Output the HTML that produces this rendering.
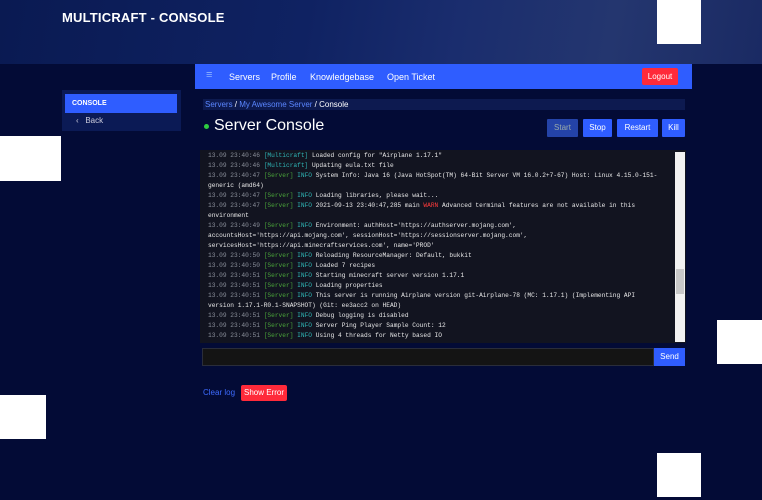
<!DOCTYPE html>
<html><head><style>
*{margin:0;padding:0;box-sizing:border-box}
body{width:762px;height:500px;overflow:hidden;background:#030b36;font-family:"Liberation Sans",sans-serif;position:relative;color:#fff}
.a{position:absolute}
.hdr{left:0;top:0;width:762px;height:64px;background:linear-gradient(100deg,#0a1a52 0%,#0f2262 40%,#1a2d6e 60%,#24366f 80%,#1a2a63 100%)}
.w{background:#fff}
.nav{left:195px;top:64px;width:497px;height:25px;background:#2f5dff;font-size:9px}
.nav span{position:absolute;top:8px}
.mono{font-family:"Liberation Mono",monospace;font-size:6.2px;color:#e8e8e8;white-space:pre;line-height:10px}
.g{color:#8a8f9a}.gr{color:#4aa53a}.c{color:#2fb5b5}.r{color:#ff3b3b}
.btn{top:119px;height:18px;background:#2f5dff;font-size:8px;text-align:center;line-height:18px;border-radius:1px}
</style></head><body>
<div class="a hdr"></div>
<div class="a" style="left:62px;top:10px;font-size:13px;font-weight:bold;letter-spacing:0.2px">MULTICRAFT - CONSOLE</div>
<div class="a nav"><span style="left:11px;color:#8fb4ff;font-size:11px;top:5px">≡</span><span style="left:34px">Servers</span><span style="left:76px">Profile</span><span style="left:115px">Knowledgebase</span><span style="left:192px">Open Ticket</span>
<div class="a" style="left:447px;top:4px;width:36px;height:17px;background:#ff2a3a;border-radius:2px;font-size:8px;text-align:center;line-height:17px">Logout</div></div>
<div class="a" style="left:62px;top:90px;width:119px;height:41px;background:#0b1a55"></div>
<div class="a" style="left:65px;top:94px;width:112px;height:19px;background:#2f5dff;font-size:7px;font-weight:bold;line-height:19px;padding-left:7px">CONSOLE</div>
<div class="a" style="left:76px;top:116px;font-size:8px;color:#ccd">‹&nbsp;&nbsp; Back</div>
<div class="a" style="left:203px;top:99px;width:482px;height:11px;background:#0d1a50;font-size:8px;line-height:11px;padding-left:2px"><span style="color:#5a86ff">Servers</span> / <span style="color:#5a86ff">My Awesome Server</span> / Console</div>
<div class="a" style="left:204px;top:124px;width:5px;height:5px;border-radius:50%;background:#2ecc40"></div>
<div class="a" style="left:214px;top:117px;font-size:16px">Server Console</div>
<div class="a btn" style="left:547px;width:31px;background:#2443a8;color:#9aa">Start</div>
<div class="a btn" style="left:583px;width:29px">Stop</div>
<div class="a btn" style="left:617px;width:41px">Restart</div>
<div class="a btn" style="left:662px;width:23px">Kill</div>
<div class="a" style="left:200px;top:150px;width:486px;height:193px;background:#121420"></div>
<div class="a" style="left:675px;top:152px;width:10px;height:190px;background:#f2f2f2"><div class="a" style="left:1px;top:117px;width:8px;height:25px;background:#c8c8c8"></div></div>
<div class="a mono" style="left:208px;top:151px"><span class="g">13.09 23:40:46</span> <span class="c">[Multicraft]</span> Loaded config for "Airplane 1.17.1"
<span class="g">13.09 23:40:46</span> <span class="c">[Multicraft]</span> Updating eula.txt file
<span class="g">13.09 23:40:47</span> <span class="gr">[Server]</span> <span class="c">INFO</span> System Info: Java 16 (Java HotSpot(TM) 64-Bit Server VM 16.0.2+7-67) Host: Linux 4.15.0-151-
generic (amd64)
<span class="g">13.09 23:40:47</span> <span class="gr">[Server]</span> <span class="c">INFO</span> Loading libraries, please wait...
<span class="g">13.09 23:40:47</span> <span class="gr">[Server]</span> <span class="c">INFO</span> 2021-09-13 23:40:47,285 main <span class="r">WARN</span> Advanced terminal features are not available in this
environment
<span class="g">13.09 23:40:49</span> <span class="gr">[Server]</span> <span class="c">INFO</span> Environment: authHost='https://authserver.mojang.com',
accountsHost='https://api.mojang.com', sessionHost='https://sessionserver.mojang.com',
servicesHost='https://api.minecraftservices.com', name='PROD'
<span class="g">13.09 23:40:50</span> <span class="gr">[Server]</span> <span class="c">INFO</span> Reloading ResourceManager: Default, bukkit
<span class="g">13.09 23:40:50</span> <span class="gr">[Server]</span> <span class="c">INFO</span> Loaded 7 recipes
<span class="g">13.09 23:40:51</span> <span class="gr">[Server]</span> <span class="c">INFO</span> Starting minecraft server version 1.17.1
<span class="g">13.09 23:40:51</span> <span class="gr">[Server]</span> <span class="c">INFO</span> Loading properties
<span class="g">13.09 23:40:51</span> <span class="gr">[Server]</span> <span class="c">INFO</span> This server is running Airplane version git-Airplane-78 (MC: 1.17.1) (Implementing API
version 1.17.1-R0.1-SNAPSHOT) (Git: ee3acc2 on HEAD)
<span class="g">13.09 23:40:51</span> <span class="gr">[Server]</span> <span class="c">INFO</span> Debug logging is disabled
<span class="g">13.09 23:40:51</span> <span class="gr">[Server]</span> <span class="c">INFO</span> Server Ping Player Sample Count: 12
<span class="g">13.09 23:40:51</span> <span class="gr">[Server]</span> <span class="c">INFO</span> Using 4 threads for Netty based IO</div>
<div class="a" style="left:202px;top:348px;width:452px;height:18px;background:#141414;border:1px solid #2a2d3a"></div>
<div class="a" style="left:654px;top:348px;width:31px;height:18px;background:#2f5dff;font-size:8px;text-align:center;line-height:18px">Send</div>
<div class="a" style="left:203px;top:388px;font-size:8px;color:#3d6bff">Clear log</div>
<div class="a" style="left:241px;top:385px;width:46px;height:16px;background:#ff2a3a;border-radius:2px;font-size:8px;text-align:center;line-height:16px">Show Error</div>
<div class="a w" style="left:657px;top:0;width:44px;height:44px"></div>
<div class="a w" style="left:0;top:136px;width:61px;height:45px"></div>
<div class="a w" style="left:717px;top:320px;width:45px;height:44px"></div>
<div class="a w" style="left:0;top:395px;width:46px;height:44px"></div>
<div class="a w" style="left:657px;top:453px;width:44px;height:44px"></div>
</body></html>
